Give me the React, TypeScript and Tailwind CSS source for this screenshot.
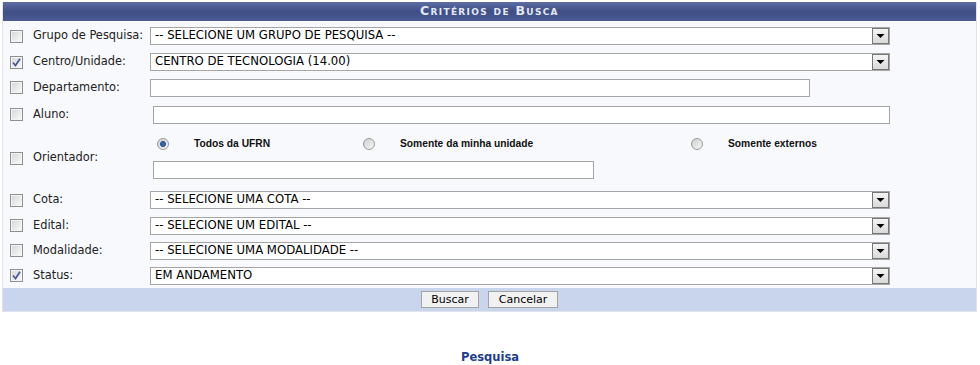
import React from "react"

interface RowProps {
  label: string
  checked?: boolean
  h: string
  children: React.ReactNode
}

function Checkbox({ checked }: { checked?: boolean }) {
  return (
    <div className="w-[13px] h-[13px] border border-[#8e8f8f] bg-linear-to-br from-[#d6d6d6] to-[#fbfbfb] flex items-center justify-center shrink-0">
      <div className="w-[11px] h-[11px] border border-[#f4f4f4] flex items-center justify-center">
        {checked && (
          <svg width="9" height="9" viewBox="0 0 9 9">
            <path d="M1 4.5 L3.5 7.5 L8 0.8" fill="none" stroke="#4a5c9e" strokeWidth="1.8" />
          </svg>
        )}
      </div>
    </div>
  )
}

function Radio({ on }: { on?: boolean }) {
  return (
    <div className="w-[12px] h-[12px] rounded-full border border-[#9a9a9a] bg-linear-to-br from-[#cfcfcf] to-[#f7f7f7] flex items-center justify-center shrink-0">
      {on && <div className="w-[6px] h-[6px] rounded-full bg-[#2c6fc0] border border-[#1d3f78]" />}
    </div>
  )
}

function Select({ value }: { value: string }) {
  return (
    <div className="w-[740px] h-[18px] border border-[#a5a5a5] bg-white flex items-center justify-between">
      <span className="pl-[4px] text-[11.7px] text-black leading-none whitespace-nowrap">{value}</span>
      <div className="w-[17px] h-[16px] border border-[#777] bg-linear-to-b from-[#f4f4f4] to-[#d9d9d9] flex items-center justify-center">
        <svg width="9" height="6" viewBox="0 0 9 6">
          <polygon points="0.5,1 8.5,1 4.5,5" fill="#000" />
        </svg>
      </div>
    </div>
  )
}

function Row({ label, checked, h, children }: RowProps) {
  return (
    <div className={`flex items-center ${h}`}>
      <div className="w-[30px] pl-[7px] flex items-center">
        <Checkbox checked={checked} />
      </div>
      <div className="w-[117px] text-[11.4px] text-[#222]">{label}</div>
      <div className="flex items-center">{children}</div>
    </div>
  )
}

export default function App() {
  return (
    <div className="font-['DejaVu_Sans',sans-serif] bg-white w-[980px] h-[365px] pt-[2px]">
      <div className="ml-[2px] w-[975px] border-x border-b border-[#e0e3ea] bg-[#f8f9fc]">
        <div className="h-[19px] bg-linear-to-b from-[#5e6da1] via-[#3f4f86] to-[#4b5a91] flex items-center justify-center">
          <span className="text-[12.5px] font-bold text-[#e2e8f6] tracking-[1.3px] [font-variant:small-caps]">Critérios de Busca</span>
        </div>
        <div className="h-[2px]" />
        <Row label="Grupo de Pesquisa:" h="h-[26px]">
          <Select value="-- SELECIONE UM GRUPO DE PESQUISA --" />
        </Row>
        <Row label="Centro/Unidade:" checked h="h-[26px]">
          <Select value="CENTRO DE TECNOLOGIA (14.00)" />
        </Row>
        <Row label="Departamento:" h="h-[25px]">
          <div className="w-[660px] h-[18px] border border-[#a5a5a5] bg-white" />
        </Row>
        <Row label="Aluno:" h="h-[29px]">
          <div className="ml-[3px] w-[737px] h-[18px] border border-[#a5a5a5] bg-white" />
        </Row>
        <div className="flex items-center h-[58px]">
          <div className="w-[30px] pl-[7px] flex items-center">
            <Checkbox />
          </div>
          <div className="w-[117px] text-[11.4px] text-[#222]">Orientador:</div>
          <div className="flex flex-col self-start pt-[9px]">
            <div className="flex items-center h-[12px] text-[10.25px] font-bold font-['Liberation_Sans',sans-serif] text-[#111]">
              <div className="w-[213px] pl-[7px] flex items-center gap-[25px]">
                <Radio on />
                <span>Todos da UFRN</span>
              </div>
              <div className="w-[328px] flex items-center gap-[25px]">
                <Radio />
                <span>Somente da minha unidade</span>
              </div>
              <div className="flex items-center gap-[25px]">
                <Radio />
                <span>Somente externos</span>
              </div>
            </div>
            <div className="mt-[11px] ml-[3px] w-[441px] h-[18px] border border-[#a5a5a5] bg-white" />
          </div>
        </div>
        <Row label="Cota:" h="h-[26px]">
          <Select value="-- SELECIONE UMA COTA --" />
        </Row>
        <Row label="Edital:" h="h-[25px]">
          <Select value="-- SELECIONE UM EDITAL --" />
        </Row>
        <Row label="Modalidade:" h="h-[25px]">
          <Select value="-- SELECIONE UMA MODALIDADE --" />
        </Row>
        <Row label="Status:" checked h="h-[25px]">
          <Select value="EM ANDAMENTO" />
        </Row>
        <div className="h-[23px] bg-[#c8d5ec] flex items-center justify-center gap-[9px]">
          <button className="w-[58px] h-[17px] border border-[#a3a3a3] bg-[#f1f1f1] text-[11px] text-black leading-none">Buscar</button>
          <button className="w-[70px] h-[17px] border border-[#a3a3a3] bg-[#f1f1f1] text-[11px] text-black leading-none">Cancelar</button>
        </div>
      </div>
      <div className="mt-[40px] text-center text-[11.5px] leading-none font-bold text-[#1d3e8e]">Pesquisa</div>
    </div>
  )
}
